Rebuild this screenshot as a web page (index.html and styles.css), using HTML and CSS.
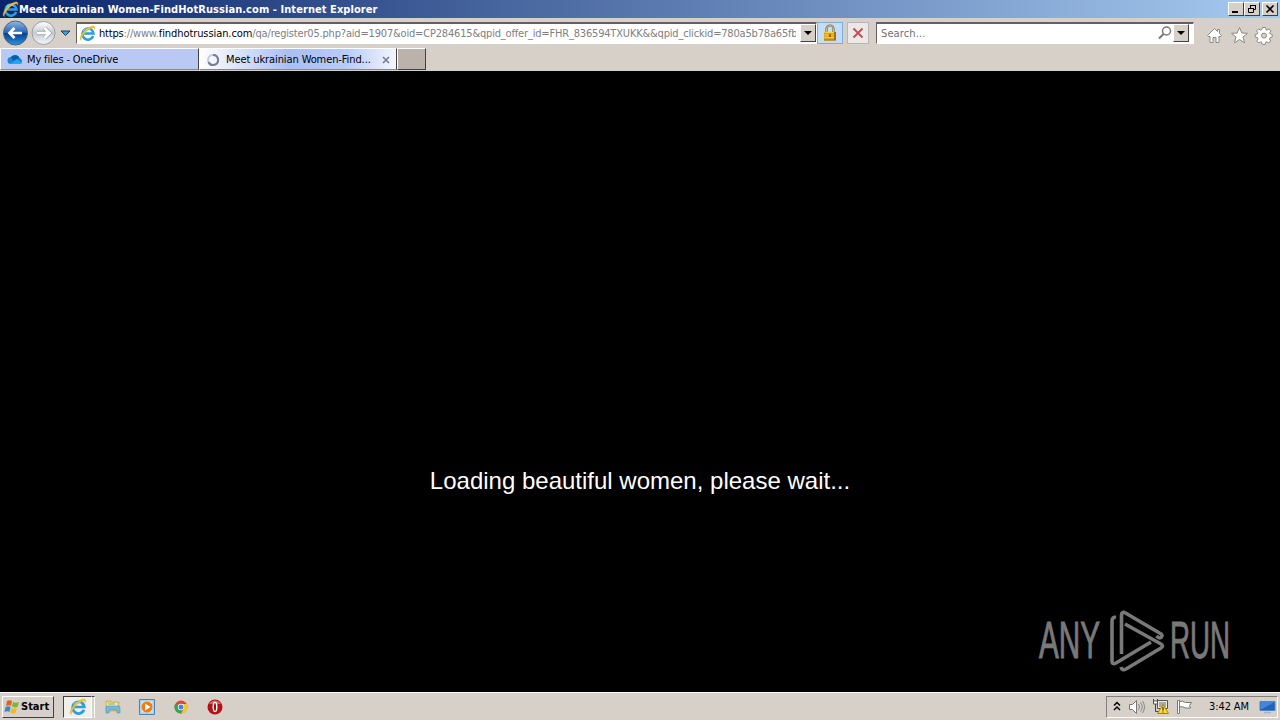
FILE: index.html
```
<!DOCTYPE html>
<html lang="en">
<head>
  <meta charset="UTF-8">
  <title>Meet ukrainian Women-FindHotRussian.com</title>
  <link rel="stylesheet" href="styles.css">
</head>
<body>
<!-- shared icons -->
<svg class="defs" width="0" height="0">
  <defs>
    <linearGradient id="blue" x2="0" y2="1"><stop stop-color="#8fb9e8"/><stop offset=".48" stop-color="#2864b4"/><stop offset=".5" stop-color="#063b91"/><stop offset="1" stop-color="#2994dd"/></linearGradient>
    <linearGradient id="grey" x2="0" y2="1"><stop stop-color="#fff"/><stop offset=".5" stop-color="#c5cbd2"/><stop offset="1" stop-color="#f5f8fa"/></linearGradient>
    <symbol id="ie" viewBox="0 0 16 16">
      <path d="M13.3 10.4A5.2 5.2 0 1 1 13.6 8H4.3" fill="none" stroke="#2f9be0" stroke-width="2.4"/>
      <path d="M4 5.8a4.500 4.500 0 0 1 7-1" fill="none" stroke="#75cdf5" stroke-width="1"/>
      <path d="M2.200 14.600C-1 13.200 3.700 5.700 8.500 2.800 12.500.3 16 0 14.500 4.100 15 1.700 12.200 2.100 8.800 4.500 4.600 7.500 1.200 12.900 2.200 14.600z" fill="#f2c32d" stroke="#e3b52c" stroke-width=".5"/>
    </symbol>
  </defs>
</svg>

<div class="titlebar">
  <svg class="title-icon" width="17" height="17"><use href="#ie"/></svg>
  <span class="title-text">Meet ukrainian Women-FindHotRussian.com - Internet Explorer</span>
  <div class="win-btns">
    <span class="win-btn"><svg width="12" height="10"><path d="M2 8h6" stroke="#000" stroke-width="2"/></svg></span>
    <span class="win-btn"><svg width="12" height="10"><path d="M4.500 4V1.500h5v4H8M4 1.500h6M2.500 4.500h5v4h-5zM2 4.500h6" fill="none" stroke="#000"/></svg></span>
    <span class="win-btn close"><svg width="12" height="10"><path d="M2.500 1.500l7 7M9.500 1.500l-7 7" stroke="#000" stroke-width="1.600"/></svg></span>
  </div>
</div>

<div class="navbar">
  <svg class="arrows" width="72" height="28">
    <circle cx="15.500" cy="14" r="12" fill="url(#blue)" stroke="#53637c"/>
    <path d="M22 14H9.500M14.500 9l-5 5 5 5" fill="none" stroke="#fff" stroke-width="2.700"/>
    <circle cx="43.500" cy="14" r="11.500" fill="url(#grey)" stroke="#9a9da3"/>
    <path d="M37 14h12.500M44.500 9l5 5-5 5" fill="none" stroke="#a4a8ad" stroke-width="4.400"/>
    <path d="M37 14h12.500M44.500 9l5 5-5 5" fill="none" stroke="#fff" stroke-width="2.700"/>
    <path d="M61 12h9l-4.500 4.500z" fill="#4aa0d8" stroke="#173c6b"/>
  </svg>
  <div class="address">
    <svg class="address-icon" width="17" height="17"><use href="#ie"/></svg>
    <span class="url"><b>https</b>://www.<b class="domain">findhotrussian.com</b>/qa/register05.php?aid=1907&amp;oid=CP284615&amp;qpid_offer_id=FHR_836594TXUKK&amp;&amp;qpid_clickid=780a5b78a65fb</span>
    <span class="drop"></span>
  </div>
  <span class="lock">
    <svg width="16" height="18"><path d="M4.500 9V5a3.500 3.500 0 0 1 7 0v4" fill="none" stroke="#776a3c" stroke-width="2.200"/><path d="M4.500 9V5a3.500 3.500 0 0 1 7 0v4" fill="none" stroke="#e8d58d" stroke-width=".8"/><path d="M2 8h12v8.500H2z" fill="#dda51b"/><path d="M2.500 8.500h11M2.500 11h11M2.500 13.500h11" stroke="#f4ce56"/><path d="M12 8h2v8.500H2v-1h10z" fill="#a96f08"/><path d="M8 10v3" stroke="#795006" stroke-width="1.500"/></svg>
  </span>
  <span class="stop">
    <svg width="12" height="12"><path d="M1.500 1.500l9 9M10.500 1.500l-9 9" stroke="#c84c50" stroke-width="1.900"/></svg>
  </span>
  <div class="search">
    <span class="hint">Search...</span>
    <svg width="16" height="17"><circle cx="9.500" cy="7" r="4" fill="none" stroke="#777" stroke-width="1.500"/><path d="M6.500 10L2 14.500" stroke="#777" stroke-width="2"/></svg>
    <span class="drop"></span>
  </div>
  <svg class="tools" width="70" height="20" fill="#fff" stroke="#8d8984">
    <path d="M1.500 9.500l7-7 3 3v-2h2v4l2 2-1.500 1.500-1-1v6.500h-3v-5H7v5H4v-6.500l-1 1z"/>
    <path d="M33.500 1.500l2.300 5.500 5.700.3-4.500 3.700 1.600 5.800-5.100-3.200-5.100 3.200 1.600-5.800-4.500-3.700 5.700-.3z"/>
    <g transform="translate(58 9)"><path d="M-1.500-7.500h3l.5 2.200 1 .5 2-1.300 2 2-1.300 2 .5 1 2 .6v2.500l-2 .5-.7 1.500 1.200 2-2 2-2-1.300-1 .5-.5 2.200h-3l-.5-2.200-1-.5-2 1.300-2-2 1.300-2-.6-1.500-2.200-.5v-2.500l2.200-.6.5-1-1.300-2 2-2 2 1.300 1-.5z"/><circle cy=".6" r="2.500" fill="#d6d0c8"/></g>
  </svg>
</div>

<div class="tabs">
  <div class="tab">
    <svg width="17" height="12"><path d="M4 10a3.500 3.500 0 0 1 0-7 5 5 0 0 1 8.500 1A3.300 3.300 0 0 1 13.500 10z" fill="#1687da"/><path d="M4 3.200a5 5 0 0 1 8.500.8L6 6.500z" fill="#075da9"/><path d="M3 10l7-4.500 5 3.500-1.500 1z" fill="#28a8ea"/></svg>
    <span class="tab-text files">My files - OneDrive</span>
  </div>
  <div class="tab active">
    <svg width="14" height="14"><circle cx="7" cy="7" r="5" fill="none" stroke="#c3cbe0" stroke-width="2"/><path d="M7 2a5 5 0 1 1-4.500 7" fill="none" stroke="#777d93" stroke-width="2"/></svg>
    <span class="tab-text meet">Meet ukrainian Women-Find...</span>
    <svg class="tab-close" width="8" height="8"><path d="M1 1l6 6M7 1L1 7" stroke="#777f94" stroke-width="1.600"/></svg>
  </div>
  <div class="new-tab"></div>
</div>

<div class="page">
  <p class="loading">Loading beautiful women, please wait...</p>
  <svg class="watermark" width="200" height="68" fill="#797979" stroke="#797979">
    <text x="4" y="51" textLength="61" lengthAdjust="spacingAndGlyphs">ANY</text>
    <text x="135" y="51" textLength="60" lengthAdjust="spacingAndGlyphs">RUN</text>
    <g fill="none" stroke-width="3.600" stroke-linejoin="round">
      <path d="M81 10.500q-4-1-4 4V54q0 4 4 2l35-21"/>
      <path d="M86.500 47V8q0-4 4-2l34 20q4 2 2 4-2 2-5-1"/>
      <path d="M90 17l36 20q3 2 0 4L91 62q-4 2-5-2"/>
    </g>
  </svg>
</div>

<div class="taskbar">
  <div class="start">
    <svg width="17" height="16"><path d="M3 2q3-1.500 5 0L7 7Q5 5.500 2 7z" fill="#e85f24"/><path d="M9 3q3 1.500 6 0l-1.500 5Q11 9 8 7.500z" fill="#79b82f"/><path d="M1.500 8q3-1.500 5 0l-1 5Q3.500 11.500.5 13z" fill="#318bd4"/><path d="M7.500 9q3 1.500 5.500.200L11.500 14Q9 15 6.300 13.500z" fill="#f3b81d"/></svg>
    <span>Start</span>
  </div>
  <div class="task current"><svg width="18" height="18"><use href="#ie"/></svg></div>
  <div class="task-edge"></div>
  <div class="quick">
    <svg width="18" height="18"><path d="M2 3h5l1 1h7v9H2z" fill="#e9cf73" stroke="#bda455" stroke-width=".6"/><path d="M3 5h10v5H3z" fill="#f8edb4"/><path d="M4 6h7" stroke="#70ae64"/><path d="M2 15V9q0-1 2-1h10q2 0 2 2v5h-3v-3H5v3z" fill="#75b9df" stroke="#4d91ba" stroke-width=".6"/></svg>
    <svg width="18" height="18"><path d="M1.500 1.500h15v15h-15z" fill="#a9d3ef" stroke="#4686b7"/><path d="M3.500 3.500h11v11h-11z" fill="#d5e8f5"/><circle cx="9" cy="9" r="5.500" fill="#f17c13"/><path d="M7 5.500v7L12.500 9z" fill="#fff"/></svg>
    <svg width="18" height="18"><circle cx="9" cy="9" r="6.500" fill="#de4637"/><path d="M9 9L3.400 5.700A6.500 6.500 0 0 0 9 15.500l3-5.100z" fill="#35a553"/><path d="M9 6h5.800A6.500 6.500 0 0 1 9 15.500l3-5z" fill="#f9c52b"/><circle cx="9" cy="9" r="3.200" fill="#fff"/><circle cx="9" cy="9" r="2.500" fill="#4285dc"/></svg>
    <svg width="18" height="18"><circle cx="9" cy="9" r="7.500" fill="#b51218"/><path d="M3 6a7 7 0 0 1 12 0z" fill="#de6262"/><ellipse cx="9" cy="9" rx="2.500" ry="5.200" fill="#fff"/><ellipse cx="9" cy="9" rx="1" ry="4" fill="#8a1015"/></svg>
  </div>
  <div class="tray">
    <svg class="chevrons" width="8" height="11"><path d="M1 4.500l3-3 3 3M1 9l3-3 3 3" fill="none" stroke="#000" stroke-width="1.500"/></svg>
    <svg class="sound" width="18" height="16"><path d="M1.500 5.500h3l4-4v13l-4-4h-3z" fill="#fff" stroke="#777"/><path d="M10.500 5q2 3 0 6M12.500 3.500q3.500 4.500 0 9M14.500 2q4 6 0 12" fill="none" stroke="#888"/></svg>
    <svg class="network" width="18" height="17"><path d="M5.500 2.500h10v8h-10z" fill="#e8e8e4" stroke="#555"/><path d="M7 4h7v5H7z" fill="#aaa"/><path d="M1.500 1v4h4V1M3.500 5v8.500h6" fill="none" stroke="#444"/><path d="M1.500 3h4v3h-4z" fill="#fff" stroke="#555"/><path d="M11 6.500l5.500 9h-11z" fill="#ffdb29" stroke="#a9850e"/><path d="M11 9v3.500M11 13.500v1" stroke="#333" stroke-width="1.200"/></svg>
    <svg class="flag" width="17" height="16"><path d="M1.500 1.500h2v13h-2z" fill="#fff" stroke="#777"/><path d="M3.500 2.500q3-1 6 1h6l-2 3 1 2.500h-5q-3-2-6-1z" fill="#fff" stroke="#777"/></svg>
    <span class="clock">3:42 AM</span>
    <svg class="desktop" width="17" height="14"><path d="M1 1.500h15v9H1z" fill="#2261b8" stroke="#5285c8"/><path d="M1.500 2h14L3 9H1.500z" fill="#4587d6"/><path d="M5 12.500h7" stroke="#9bb5d3" stroke-width="1.500"/></svg>
  </div>
</div>
</body>
</html>
```
FILE: styles.css
```
* {
  box-sizing: border-box;
  margin: 0;
  padding: 0;
}

body {
  display: flex;
  flex-direction: column;
  width: 1280px;
  height: 720px;
  overflow: hidden;
  background: #d6d0c8;
  color: #000;
  font: 11px/14px "DejaVu Sans Condensed", "DejaVu Sans", sans-serif;
  font-stretch: condensed;
}

svg {
  display: block;
  flex: none;
}

.defs {
  position: absolute;
}

.titlebar {
  display: flex;
  align-items: center;
  height: 18px;
  padding: 0 2px;
  background: linear-gradient(90deg, #0a246a, #a6caf0);
}

.title-text {
  padding-top: 1px;
  color: #fff;
  font-weight: bold;
  letter-spacing: 0.07px;
  white-space: nowrap;
}

.win-btns {
  display: flex;
  margin-left: auto;
}

.win-btn {
  display: flex;
  align-items: center;
  justify-content: center;
  width: 16px;
  height: 14px;
  border: 1px solid;
  border-color: #fff #404040 #404040 #fff;
  background: #d6d0c8;
}

.win-btn.close {
  margin-left: 2px;
}

.navbar {
  display: flex;
  height: 30px;
  border-top: 2px solid #d6d0c8;
}

.arrows {
  margin-top: -1px;
}

.address,
.search {
  display: flex;
  height: 22px;
  margin-top: 2px;
  border: 1px solid;
  border-color: #686058 #fff #fff #686058;
  border-top-width: 2px;
  background: #fff;
}

.address {
  width: 741px;
  margin-left: 4px;
  padding-left: 2px;
}

.address-icon {
  margin-top: 1px;
}

.url {
  width: 697px;
  margin-left: 3px;
  overflow: hidden;
  color: #808080;
  line-height: 20px;
  letter-spacing: -0.18px;
  white-space: nowrap;
}

.url b {
  color: #000;
  font-weight: normal;
}

.url .domain {
  letter-spacing: -0.08px;
}

.drop {
  display: flex;
  align-items: center;
  justify-content: center;
  width: 16px;
  height: 18px;
  margin-left: auto;
  border: 1px solid;
  border-color: #fff #404040 #404040 #fff;
  background: #d6d0c8;
}

.drop::before {
  content: "";
  border: 4px solid transparent;
  border-top-color: #000;
  border-bottom: 0;
}

.lock,
.stop {
  display: flex;
  align-items: center;
  justify-content: center;
  height: 22px;
  margin-top: 2px;
}

.lock {
  width: 26px;
  border: 1px solid #78aee5;
  background: #c5dcf5;
}

.stop {
  width: 22px;
  margin-left: 4px;
  border: 1px solid #b9b5b3;
  background: #ebe8e8;
}

.search {
  width: 318px;
  margin-left: 7px;
  padding-right: 4px;
}

.hint {
  margin-right: auto;
  padding-left: 4px;
  color: #707070;
  line-height: 20px;
  letter-spacing: 0.12px;
}

.search .drop {
  margin-left: 0;
}

.tools {
  margin: 6px 0 0 12px;
}

.tabs {
  display: flex;
  height: 23px;
  border-bottom: 1px solid #d6d0c8;
}

.tab {
  display: flex;
  align-items: center;
  width: 199px;
  height: 22px;
  padding-left: 6px;
  border: 1px solid;
  border-color: #fff #404040 #88888f #fff;
  background: #b9c9f3;
}

.tab.active {
  width: 198px;
  background: linear-gradient(90deg, #fff, #a9bff3 45%, #b9cbf8 75%, #f4f6ff);
}

.tab svg {
  margin-top: 1px;
}

.tab-text {
  padding-top: 2px;
  white-space: nowrap;
}

.files {
  margin-left: 3px;
  letter-spacing: -0.16px;
}

.meet {
  margin-left: 6px;
  letter-spacing: -0.1px;
}

.tab .tab-close {
  margin: 2px 6px 0 auto;
}

.new-tab {
  width: 29px;
  height: 22px;
  border: 1px solid;
  border-color: #fff #404040 #404040 #fff;
  background: #bbb3ab;
}

.page {
  position: relative;
  flex: 1;
  background: #000;
}

.loading {
  padding-top: 396px;
  color: #fff;
  font: 24px/28px "Liberation Sans", Arial, sans-serif;
  text-align: center;
}

/* logo floats over the page */
.watermark {
  position: absolute;
  right: 45px;
  bottom: 17px;
  font: 51px "Liberation Sans", sans-serif;
}

.taskbar {
  display: flex;
  align-items: center;
  height: 28px;
  padding: 2px;
  border-top: 1px solid #fff;
  background: #d6d0c8;
}

.start {
  display: flex;
  align-items: center;
  width: 52px;
  height: 22px;
  padding-left: 1px;
  border: 1px solid;
  border-color: #fff #404040 #404040 #fff;
  font-weight: bold;
}

.task {
  display: flex;
  align-items: center;
  justify-content: center;
  width: 29px;
  height: 22px;
  margin-left: 9px;
  border: 1px solid;
  border-color: #404040 #fff #fff #404040;
  background: #f1efec;
}

.task-edge {
  width: 3px;
  height: 22px;
  border-top: 1px solid #404040;
  border-right: 1px solid #fff;
}

.quick {
  display: flex;
  gap: 16px;
  margin-left: 9px;
}

.tray {
  display: flex;
  align-items: center;
  width: 172px;
  height: 22px;
  margin-left: auto;
  padding-left: 6px;
  border: 1px solid;
  border-color: #808080 #fff #fff #808080;
}

.sound {
  margin-left: 7px;
}

.network {
  margin-left: 6px;
}

.flag {
  margin-left: 6px;
}

.clock {
  margin-left: 16px;
  letter-spacing: -0.1px;
  white-space: nowrap;
}

.desktop {
  margin: 0 1px 0 auto;
}
```
